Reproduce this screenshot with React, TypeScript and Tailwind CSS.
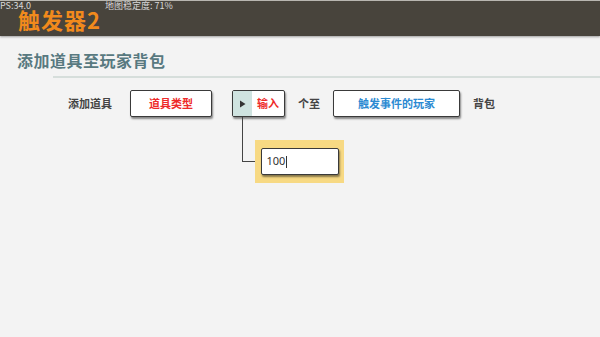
import React from "react";

const font = { fontFamily: '"Noto Sans CJK SC", "Noto Sans", sans-serif' };

function SlotButton({ label, color, width }: { label: string; color: string; width: string }) {
  return (
    <div
      className={`${width} h-[27px] flex items-center justify-center bg-white border-[1.5px] border-[#3a3a3a] rounded-[2px] shadow-[1px_2px_2px_rgba(0,0,0,0.45)] text-[11px] font-bold ${color}`}
    >
      {label}
    </div>
  );
}

export default function App() {
  return (
    <div className="w-[600px] h-[337px] bg-[#f3f3f3] overflow-hidden" style={font}>
      {/* top bar */}
      <div className="relative h-[36px] bg-[#48443c] border-t border-[#b8b6b0] shadow-[0_1px_2px_rgba(0,0,0,0.35)] flex items-center pl-[18px]">
        <span className="text-[22px] leading-none font-bold text-[#f28a1c] tracking-[1px]">触发器2</span>
        <span className="absolute left-0 top-0 text-[9px] leading-[10px] text-[#d8d8d8]">PS:34.0</span>
        <span className="absolute left-[105px] top-0 text-[9px] leading-[10px] text-[#d8d8d8]">地图稳定度: 71%</span>
      </div>

      {/* section title */}
      <div className="pl-[17px] pt-[14px] h-[40px]">
        <h1 className="text-[16px] leading-[20px] font-bold text-[#587980] tracking-[0.5px]">添加道具至玩家背包</h1>
      </div>
      <div className="ml-[53px] h-[2px] bg-[#d6dedb]" />

      {/* action row */}
      <div className="flex items-center pl-[68px] mt-[12px] text-[11px] font-bold text-[#444]">
        <span className="w-[62px]">添加道具</span>
        <SlotButton label="道具类型" color="text-[#ee2a2a]" width="w-[82px]" />
        <div className="ml-[20px] w-[53px] h-[27px] flex bg-white border-[1.5px] border-[#3a3a3a] rounded-[2px] shadow-[1px_2px_2px_rgba(0,0,0,0.45)] overflow-hidden">
          <div className="w-[19px] bg-[#cfe3e0] flex items-center justify-center">
            <svg width="7" height="8" viewBox="0 0 7 8">
              <path d="M1 0.5 L6.5 4 L1 7.5 Z" fill="#333" />
            </svg>
          </div>
          <div className="flex-1 flex items-center justify-center text-[#ee2a2a]">输入</div>
        </div>
        <span className="ml-[13px] w-[35px]">个至</span>
        <SlotButton label="触发事件的玩家" color="text-[#2b8ad2]" width="w-[127px]" />
        <span className="ml-[13px]">背包</span>
      </div>

      {/* value input */}
      <div className="flex ml-[242px]">
        <div className="w-[13px] h-[45px] border-l-[1.5px] border-b-[1.5px] border-[#444]" />
        <div className="mt-[23px] w-[89px] h-[43px] bg-[#f7d983] flex items-center justify-center">
          <div className="w-[78px] h-[27px] bg-white border-[1.5px] border-[#3a3a3a] rounded-[2px] shadow-[1px_2px_2px_rgba(0,0,0,0.45)] flex items-center pl-[5px] text-[11px] text-[#333]" style={{ fontFamily: '"Noto Sans", sans-serif' }}>
            100<span className="ml-[1px] w-px h-[12px] bg-[#333]" />
          </div>
        </div>
      </div>
    </div>
  );
}
